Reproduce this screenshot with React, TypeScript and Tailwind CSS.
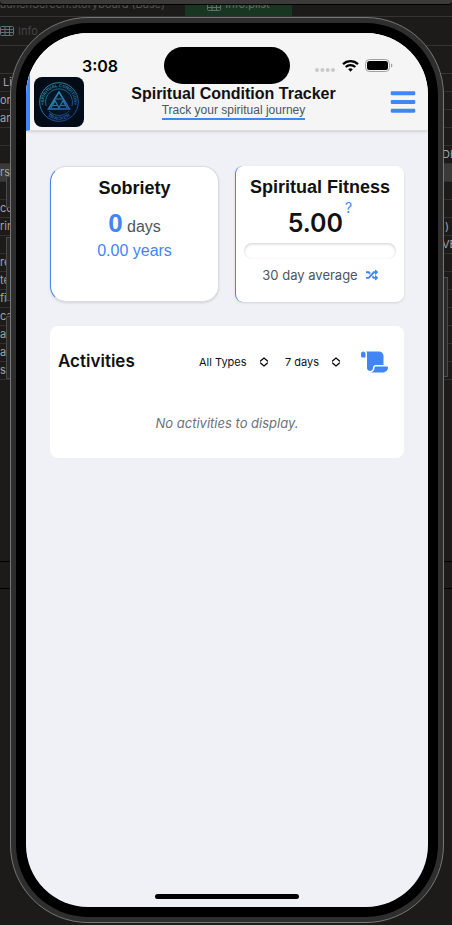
import React from "react";
import { FaBars, FaRandom } from "react-icons/fa";
import { FaScroll } from "react-icons/fa6";

const editorRows: { left?: string; right?: string; selected?: boolean }[] = [
  { left: " Li" },
  { left: "on" },
  { left: "am" },
  {},
  { right: "DE" },
  { left: "rs", selected: true },
  {},
  { left: "co" },
  { left: "rin", right: " )" },
  { right: "VE" },
  { left: "re" },
  { left: "te" },
  { left: "fi" },
  { left: "ca" },
  { left: "ac" },
  { left: "ac" },
  { left: "sa" },
];

function TableGlyph({ className }: { className: string }) {
  return (
    <svg viewBox="0 0 14 10" className={className} fill="none" stroke="currentColor">
      <rect x="0.5" y="0.5" width="13" height="9" rx="1" />
      <path d="M0.5 3.5h13M0.5 6.5h13M5 0.5v9M9.5 0.5v9" />
    </svg>
  );
}

function EditorBackdrop() {
  return (
    <div
      aria-hidden="true"
      className="absolute inset-0 overflow-hidden bg-[#1c1b1a] font-[Inter,sans-serif] text-[11px] text-[#a3a3a3]"
    >
      <div className="relative z-10 h-[5px] rounded-b-sm border-b border-black bg-[#3c3b3a]" />
      <div className="flex h-3 overflow-hidden border-b border-[#343332] leading-3 text-[#555453]">
        <div className="-mt-[7px] w-[185px] whitespace-nowrap">aunchScreen.storyboard (Base)</div>
        <div className="flex h-[11px] w-[107px] justify-center gap-1 overflow-hidden bg-[#193622] text-[#637067]">
          <TableGlyph className="-mt-1 h-2.5 w-3.5 shrink-0" />
          <span className="-mt-[7px]">Info.plist</span>
        </div>
      </div>
      <div className="flex h-[29px] items-center gap-1 border-b border-[#343332] text-[#454443]">
        <TableGlyph className="h-2.5 w-3.5 text-[#5e7078]" />
        <span>Info</span>
      </div>
      <div className="h-7 border-b border-[#343332]" />
      {editorRows.map((row, i) => (
        <div
          key={i}
          className={`flex h-[18px] items-center justify-between border-b border-[#30302f] whitespace-pre ${row.selected ? "bg-[#3a3a3a]" : ""}`}
        >
          <span>{row.left}</span>
          <span className="w-[10px]">{row.right}</span>
        </div>
      ))}
      <div className="mt-[181px] h-7 border-y border-black" />
    </div>
  );
}

function SideButtons() {
  const key = "absolute w-2 border border-[#4a4a4a] bg-[#292929]";
  return (
    <div aria-hidden="true">
      <div className={`${key} -left-1 top-[159px] h-[32px]`} />
      <div className={`${key} -left-1 top-[220px] h-[64px]`} />
      <div className={`${key} -left-1 top-[299px] h-[63px]`} />
      <div className={`${key} -right-1 top-[260px] h-[100px]`} />
    </div>
  );
}

function StatusBar() {
  return (
    <div className="-ml-1 grid h-11 grid-cols-[1fr_126px_1fr] items-start pt-3.5 text-black">
      <div className="flex h-[37px] items-center justify-center pl-2.5 font-[Inter,sans-serif] text-base font-semibold">
        3:08
      </div>
      <div className="relative z-10 h-[37px] rounded-full bg-black" />
      <div className="flex h-[37px] items-center justify-center gap-1.5 pr-4 pl-1">
        <svg viewBox="0 0 22 14" className="h-3.5 w-[22px]" fill="#c9c9c9">
          <circle cx="3" cy="11" r="2" />
          <circle cx="8.4" cy="11" r="2" />
          <circle cx="13.7" cy="11" r="2" />
          <circle cx="19" cy="11" r="2" />
        </svg>
        <svg viewBox="0 0 17 12" className="h-3 w-[17px]">
          <path d="M8.5 11.8 6.2 9.3a3.5 3.5 0 0 1 4.6 0Z" />
          <path d="M1 4.1a11 11 0 0 1 15 0M3.7 7a7 7 0 0 1 9.6 0" fill="none" stroke="currentColor" strokeWidth="2.3" />
        </svg>
        <svg viewBox="0 0 28 13" className="h-[13px] w-7">
          <rect x="0.5" y="0.5" width="24" height="12" rx="4" fill="none" stroke="#a0a0a0" />
          <rect x="2" y="2" width="21" height="9" rx="2.5" />
          <path d="M26 4.5c1.8.5 1.8 3.500 0 4Z" fill="#a0a0a0" />
        </svg>
      </div>
    </div>
  );
}

function Logo() {
  return (
    <svg viewBox="0 0 50 50" className="size-[50px] shrink-0 rounded-lg" role="img" aria-label="Spiritual Condition Tracker logo">
      <defs>
        <radialGradient id="logo-bg">
          <stop offset="0" stopColor="#061d31" />
          <stop offset="1" stopColor="#020b16" />
        </radialGradient>
        <linearGradient id="logo-line" x1="10" y1="5" x2="36" y2="45" gradientUnits="userSpaceOnUse">
          <stop offset="0" stopColor="#36a0ab" />
          <stop offset="0.55" stopColor="#2878ae" />
          <stop offset="1" stopColor="#283e99" />
        </linearGradient>
        <path id="logo-top" d="M10 25a15 15 0 0 1 30 0" />
        <path id="logo-bottom" d="M7 25a18 18 0 0 0 36 0" />
      </defs>
      <rect width="50" height="50" fill="url(#logo-bg)" />
      <g fill="none" stroke="url(#logo-line)">
        <circle cx="25" cy="25" r="19.300" strokeWidth="0.9" />
        <path d="M12 29a13.500 13.500 0 1 1 26 0M15 34a13.500 13.500 0 0 0 20 0" strokeWidth="0.7" />
        <path d="M25 15 14.500 32h21Z" strokeWidth="1.5" />
        <path d="m17 31 4-7.500 4 7.500 4-7.500 4 7.500M19 28.500h4M27 28.500h4M22 22h6" strokeWidth="1.2" />
      </g>
      <g fill="url(#logo-line)" fontFamily="Liberation Sans, sans-serif" fontWeight="700" textAnchor="middle">
        <text fontSize="4.300">
          <textPath href="#logo-top" startOffset="50%">SPIRITUAL CONDITION</textPath>
        </text>
        <text fontSize="5">
          <textPath href="#logo-bottom" startOffset="50%">TRACKER</textPath>
        </text>
        <circle cx="8.500" cy="27" r="0.8" />
        <circle cx="41.500" cy="27" r="0.8" />
      </g>
    </svg>
  );
}

function Header() {
  return (
    <header className="border-b border-l-4 border-b-[#dddddd] border-l-[#4285f7] bg-[#f5f5f5] shadow-sm">
      <StatusBar />
      <div className="flex items-center justify-between pr-[11px] pb-[3px] pl-1">
        <Logo />
        <div className="flex flex-col items-center pr-1.5">
          <h1 className="text-base leading-[18px] font-bold text-[#111]">Spiritual Condition Tracker</h1>
          <p className="border-b-2 border-[#4285f7] text-xs leading-[15px] text-[#4b5563]">Track your spiritual journey</p>
        </div>
        <button type="button" aria-label="Open menu" className="text-[#4285f7]">
          <FaBars size={28} />
        </button>
      </div>
    </header>
  );
}

function SortGlyph() {
  return (
    <svg
      viewBox="0 0 10 10"
      className="pointer-events-none absolute top-1/2 right-0 size-2.5 -translate-y-1/2 text-black"
      fill="none"
      stroke="currentColor"
      strokeWidth="1.2"
      strokeLinecap="round"
      strokeLinejoin="round"
    >
      <path d="M1.500 4 5 1l3.500 3M1.500 6 5 9l3.500-3" />
    </svg>
  );
}

function Filter({ label, options, width }: { label: string; options: string[]; width: string }) {
  return (
    <div className={`relative ${width}`}>
      <select aria-label={label} className="block w-full appearance-none bg-transparent text-[11px] leading-4 text-[#111]">
        {options.map((o) => (
          <option key={o}>{o}</option>
        ))}
      </select>
      <SortGlyph />
    </div>
  );
}

function Dashboard() {
  return (
    <main className="flex-1 px-6 pt-[35px]">
      <div className="grid grid-cols-2 gap-4">
        <section className="h-[136px] rounded-2xl border border-[#dcdcdc] border-l-[#4285f7] bg-white pt-[9px] text-center shadow-sm">
          <h2 className="text-lg leading-6 font-bold text-[#111]">Sobriety</h2>
          <p className="mt-2.5 leading-[26px] text-[#4b5563]">
            <span className="text-[26px] font-bold text-[#4285f7]">0</span> days
          </p>
          <p className="leading-[22px] text-[#4285f7]">0.00 years</p>
        </section>
        <section className="h-[136px] rounded-lg border-l border-[#4285f7] bg-white px-2 pt-[9px] text-center shadow-sm">
          <h2 className="text-lg leading-6 font-bold whitespace-nowrap text-[#111]">Spiritual Fitness</h2>
          <div className="flex h-[34px] items-start justify-center gap-0.5 font-[Inter,sans-serif]">
            <span className="pt-2 text-[25px] leading-8 font-semibold text-[#111]">5.00</span>
            <button type="button" aria-label="About this score" className="text-sm leading-[18px] text-[#4285f7]">
              ?
            </button>
          </div>
          <div
            role="progressbar"
            aria-label="Spiritual fitness"
            aria-valuenow={0}
            className="mt-2.5 h-4 rounded-full bg-white inset-shadow-[0_1px_3px_#00000033]"
          />
          <div className="mt-1.5 flex items-center justify-center gap-2 font-[Inter,sans-serif] text-[13px] leading-5 text-[#4b5563]">
            <span>30 day average</span>
            <button type="button" aria-label="Change time frame" className="text-[#4285f7]">
              <FaRandom size={12} />
            </button>
          </div>
        </section>
      </div>
      <section className="mt-6 h-[132px] rounded-lg bg-white px-2 pt-5 font-[Inter,sans-serif]">
        <div className="flex h-8 items-center pr-2">
          <h2 className="flex-1 text-[17px] font-semibold text-[#111]">Activities</h2>
          <Filter label="Activity type" options={["All Types", "Meetings", "Prayer"]} width="w-[70px]" />
          <div className="w-4" />
          <Filter label="Time range" options={["7 days", "30 days", "90 days"]} width="w-[56px]" />
          <button type="button" aria-label="Show activity log" className="ml-5 text-[#4285f7]">
            <FaScroll className="h-6 w-[27px]" />
          </button>
        </div>
        <p className="mt-[35px] text-center text-[13px] leading-5 text-[#6b7280] italic">No activities to display.</p>
      </section>
    </main>
  );
}

export default function App() {
  return (
    <div className="relative min-h-screen overflow-hidden pt-[17px] pr-2 pb-0.5 pl-2.5 font-['Liberation_Sans',Arial,sans-serif]">
      <EditorBackdrop />
      <div className="relative">
        <SideButtons />
        <div className="relative rounded-[78px] border border-[#777] bg-[#2e2e2e] p-[5px]">
          <div className="rounded-[72px] bg-black p-2.5">
            <div className="flex min-h-[calc(100vh-51px)] flex-col overflow-hidden rounded-[62px] bg-[#f0f1f6]">
              <Header />
              <Dashboard />
              <div className="mx-auto mb-2 h-[5px] w-36 rounded-full bg-black" />
            </div>
          </div>
        </div>
      </div>
    </div>
  );
}
